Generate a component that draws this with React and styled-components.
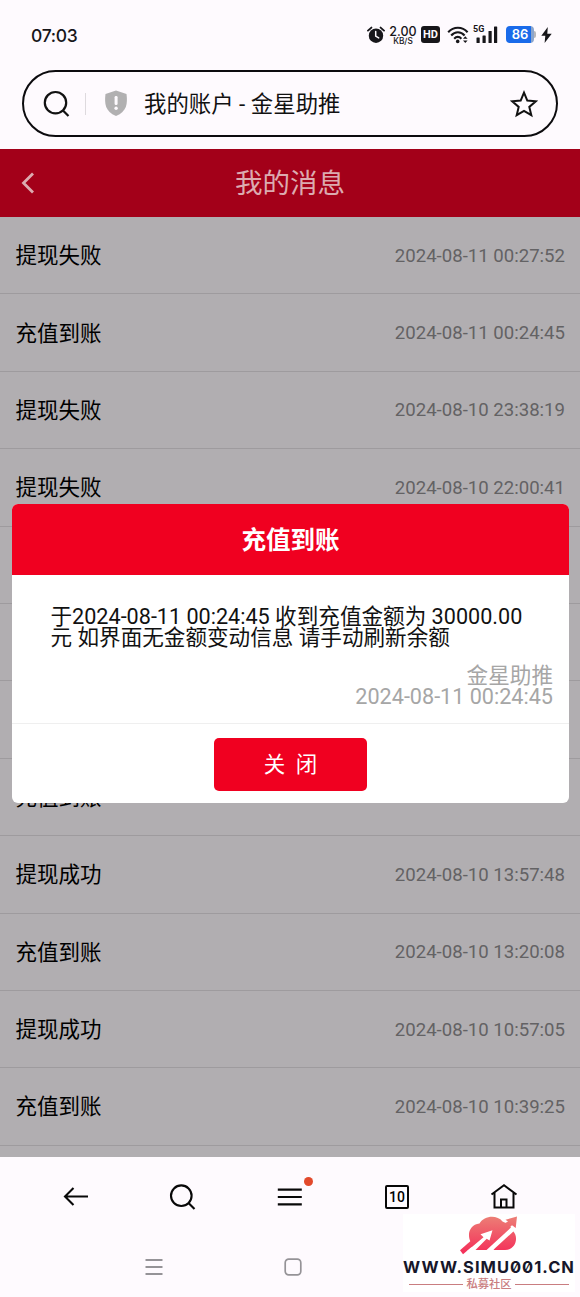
import { useState } from 'react';

import styled, { createGlobalStyle } from 'styled-components';

const messages = [
  { id: 1, title: '提现失败', time: '2024-08-11 00:27:52' },
  { id: 2, title: '充值到账', time: '2024-08-11 00:24:45' },
  { id: 3, title: '提现失败', time: '2024-08-10 23:38:19' },
  { id: 4, title: '提现失败', time: '2024-08-10 22:00:41' },
  { id: 5, title: '', time: '' },
  { id: 6, title: '', time: '' },
  { id: 7, title: '', time: '' },
  { id: 8, title: '充值到账', time: '' },
  { id: 9, title: '提现成功', time: '2024-08-10 13:57:48' },
  { id: 10, title: '充值到账', time: '2024-08-10 13:20:08' },
  { id: 11, title: '提现成功', time: '2024-08-10 10:57:05' },
  { id: 12, title: '充值到账', time: '2024-08-10 10:39:25' },
  { id: 13, title: '', time: '' },
];

function StatusIcons() {
  return (
    <StatusGroup>
      <svg width="18" height="18" viewBox="0 0 18 18">
        <circle cx="9" cy="9.7" r="7.2" fill="#17161a" />
        <path d="M1 4.6 4.4 1.6M17 4.6 13.6 1.6" stroke="#17161a" strokeWidth="1.9" strokeLinecap="round" />
        <path d="M8.7 5.6v4.5l3 1.8" stroke="#fefafe" strokeWidth="1.5" fill="none" strokeLinecap="round" />
      </svg>
      <Speed>
        <b>2.00</b>
        <small>KB/S</small>
      </Speed>
      <HdBadge>HD</HdBadge>
      <svg width="22" height="18" viewBox="0 0 22 18" fill="none" stroke="#17161a" strokeWidth="2.1">
        <path d="M1.2 6.3C6.6.3 15.2.3 20.6 6.3" />
        <path d="M4.2 9.5C8 5.2 13.8 5.2 17.6 9.5" />
        <path d="M7.2 12.7C9.4 10.3 12.2 10.3 14.4 12.7" />
        <circle cx="10.7" cy="15.4" r="1.8" fill="#17161a" stroke="none" />
        <path d="m16 12.8 2.3-2.5 2.3 2.5zM16 14.4l2.3 2.5 2.3-2.5z" fill="#17161a" stroke="none" />
      </svg>
      <Signal>
        <span>5G</span>
        <svg width="24" height="19" viewBox="0 0 24 19" fill="#17161a">
          <rect x="2.5" y="12.5" width="3.2" height="5.5" rx=".6" />
          <rect x="8.5" y="10.5" width="3.2" height="7.5" rx=".6" />
          <rect x="14.5" y="6" width="3.2" height="12" rx=".6" />
          <rect x="20" y="1.5" width="3.2" height="16.5" rx=".6" />
        </svg>
      </Signal>
      <Battery>86</Battery>
      <svg width="11" height="16" viewBox="0 0 11 16">
        <path d="M6.8 0 .3 8.8h4L3.6 16 10.7 6.7H6.3z" fill="#17161a" />
      </svg>
    </StatusGroup>
  );
}

function Watermark() {
  return (
    <ContainerWatermark>
      <svg width="62" height="42" viewBox="0 0 62 42">
        <defs>
          <linearGradient id="cloud" gradientUnits="userSpaceOnUse" x1="0" y1="2" x2="0" y2="38">
            <stop offset="0" stopColor="#ec7f76" />
            <stop offset="1" stopColor="#f4315a" />
          </linearGradient>
        </defs>
        <g fill="url(#cloud)">
          <path d="M13 28.500C8.500 21 11.500 10.500 21.500 9.500 26 1.500 39 .5 44.500 7.500L51 10.500 55 17C61 23 58 36 47 36H14z" />
          <path d="M59 2.500 57.700 14 54 11.200 44 20 38 14 50 7.500 47.500 5.700z" />
          <path d="M2 36.300 20 20.500 25 23.500 5 40.300z" />
        </g>
        <path
          d="M8.500 37.500 25.500 23.300 22.500 20.300 34.500 16.300 31.500 26.500 28.700 24.700 17 36.500zM28 36.500 54.600 12 57.500 15.500 37 34.300 35 36.500z"
          fill="#fff"
        />
      </svg>
      <WatermarkUrl>WWW.SIMU001.CN</WatermarkUrl>
      <WatermarkCaption>私募社区</WatermarkCaption>
    </ContainerWatermark>
  );
}

function App() {
  const [open, setOpen] = useState(true);

  return (
    <Phone>
      <GlobalStyle />
      <StatusBar>
        <Clock>07:03</Clock>
        <StatusIcons />
      </StatusBar>

      <AddressBar>
        <svg width="28" height="28" viewBox="0 0 28 28" fill="none" stroke="#111" strokeWidth="2.2">
          <circle cx="12.500" cy="12.700" r="10.700" />
          <path d="m20 20.500 5.500 5.500" />
        </svg>
        <Separator />
        <svg width="24" height="27" viewBox="0 0 24 27">
          <path d="M12 .5 22.500 4c1.200 9.500.4 17.500-10.500 22C1.100 21.500.3 13.500 1.500 4z" fill="#b1b0b1" />
          <rect x="10.600" y="6" width="3" height="9" rx="1.300" fill="#fefafe" />
          <circle cx="12.100" cy="18.300" r="1.700" fill="#fefafe" />
        </svg>
        <AddressText>我的账户 - 金星助推</AddressText>
        <svg width="28" height="28" viewBox="0 0 28 28" fill="none" stroke="#111" strokeWidth="2">
          <path d="m14 2.700 3.300 7.900 8.500.7-6.500 5.600 2 8.300L14 20.800l-7.300 4.400 2-8.300-6.500-5.600 8.500-.7z" />
        </svg>
      </AddressBar>

      <Page>
        <PageHeader>
          <svg width="14" height="22" viewBox="0 0 14 22" fill="none" stroke="currentColor" strokeWidth="2.800">
            <path d="M12 1.500 2.500 11 12 20.500" />
          </svg>
          <h1>我的消息</h1>
        </PageHeader>
        <List>
          {messages.map((message) => (
            <Row key={message.id}>
              <span>{message.title}</span>
              <time>{message.time}</time>
            </Row>
          ))}
        </List>
        {open && (
          <Mask>
            <Dialog>
              <DialogTitle>充值到账</DialogTitle>
              <DialogBody>
                <p>
                  于2024-08-11 00:24:45 收到充值金额为 30000.00
                  <br />元 如界面无金额变动信息 请手动刷新余额
                </p>
                <Signature>
                  金星助推
                  <br />
                  2024-08-11 00:24:45
                </Signature>
              </DialogBody>
              <DialogFooter>
                <CloseButton onClick={() => setOpen(false)}>关&nbsp; 闭</CloseButton>
              </DialogFooter>
            </Dialog>
          </Mask>
        )}
      </Page>

      <Toolbar>
        <svg width="28" height="28" viewBox="0 0 28 28" fill="none" stroke="#080808" strokeWidth="2.100">
          <path d="M26 13.500H3M11.500 5 3 13.500l8.500 8.500" />
        </svg>
        <svg width="28" height="28" viewBox="0 0 28 28" fill="none" stroke="#080808" strokeWidth="2.100">
          <circle cx="12.300" cy="12.700" r="10.300" />
          <path d="m19.500 20 6 6" />
        </svg>
        <MenuIcon>
          <svg width="28" height="28" viewBox="0 0 28 28" stroke="#080808" strokeWidth="2.200">
            <path d="M1.800 6.700h24M1.800 14h24M1.800 21.300h24" />
          </svg>
        </MenuIcon>
        <TabCount>10</TabCount>
        <svg width="28" height="28" viewBox="0 0 28 28" fill="none" stroke="#080808" strokeWidth="2">
          <path d="M1.500 11.500 14 2.300l12.500 9.200M4.500 9.800v14.700h19V9.800M11 24.500v-8h5.500v8" />
        </svg>
      </Toolbar>

      <SystemNav>
        <svg width="18" height="18" viewBox="0 0 18 18" stroke="#959397" strokeWidth="1.800">
          <path d="M.5 2h17M.5 9h17M.5 16h17" />
        </svg>
        <svg width="18" height="18" viewBox="0 0 18 18" fill="none" stroke="#959397" strokeWidth="1.700">
          <rect x="1.200" y="1.200" width="15.600" height="15.600" rx="3.500" />
        </svg>
      </SystemNav>
      <Watermark />
    </Phone>
  );
}

export default App;

const GlobalStyle = createGlobalStyle`
  * {
    box-sizing: border-box;
  }
  body {
    margin: 0;
    font-family: Roboto, 'Noto Sans CJK SC', sans-serif;
  }
  svg {
    display: block;
    flex: none;
  }
`;

const Phone = styled.div`
  position: relative;
  width: 580px;
  height: 1297px;
  overflow: hidden;
  display: flex;
  flex-direction: column;
  background-color: #fefafe;
`;

const StatusBar = styled.div`
  height: 69px;
  display: flex;
  align-items: center;
  justify-content: space-between;
  padding: 0 28px 0 31px;
  color: #17161a;
`;

const Clock = styled.div`
  padding-top: 1px;
  font-family: Inter, sans-serif;
  font-size: 17.5px;
  font-weight: 500;
  letter-spacing: -0.3px;
`;

const StatusGroup = styled.div`
  display: flex;
  align-items: center;
`;

const Speed = styled.div`
  width: 28px;
  margin-left: 4px;
  padding-top: 1px;
  display: flex;
  flex-direction: column;
  align-items: center;
  font-family: Inter, sans-serif;
  b {
    font-size: 12.5px;
    line-height: 11px;
    font-weight: 500;
  }
  small {
    font-size: 8.3px;
    line-height: 8px;
    font-weight: 500;
  }
`;

const HdBadge = styled.div`
  width: 19px;
  height: 17px;
  margin: 0 7px 0 4px;
  border-radius: 3px;
  background-color: #17161a;
  color: #fefafe;
  font-size: 11px;
  line-height: 17px;
  font-weight: 700;
  text-align: center;
`;

const Signal = styled.div`
  position: relative;
  margin-left: 5px;
  span {
    position: absolute;
    top: -1px;
    left: -1px;
    font-size: 9px;
    line-height: 10px;
    font-weight: 700;
  }
`;

const Battery = styled.div`
  position: relative;
  width: 28px;
  height: 17px;
  margin: 0 7px 0 8px;
  border-radius: 4px;
  background: linear-gradient(to right, #1a6bea 89%, #8ba5cd 89%);
  color: #fff;
  font-family: Inter, sans-serif;
  font-size: 13px;
  line-height: 17px;
  font-weight: 600;
  text-align: center;
  &::after {
    content: '';
    position: absolute;
    top: 5px;
    right: -2px;
    width: 2px;
    height: 7px;
    border-radius: 0 2px 2px 0;
    background-color: #b8b7bc;
  }
`;

const AddressBar = styled.div`
  height: 67px;
  margin: 1px 22px 0;
  padding: 0 18px 0 19px;
  display: flex;
  align-items: center;
  border: 2px solid #0c0b0e;
  border-radius: 34px;
`;

const Separator = styled.div`
  width: 1px;
  height: 22px;
  margin: 0 18px 0 14px;
  background-color: #dedade;
`;

const AddressText = styled.div`
  flex: 1;
  margin-left: 16px;
  color: #111;
  font-size: 22.4px;
  line-height: 28px;
`;

const Page = styled.div`
  position: relative;
  height: 1008px;
  margin-top: 12px;
  overflow: hidden;
`;

const PageHeader = styled.div`
  position: relative;
  z-index: 1;
  height: 68px;
  display: grid;
  grid-template-columns: 60px 1fr 60px;
  align-items: center;
  background-color: #a30019;
  color: #dcabb0;
  svg {
    margin-left: 21px;
  }
  h1 {
    margin: 0;
    padding-top: 2px;
    font-size: 27.5px;
    line-height: 36px;
    font-weight: 400;
    text-align: center;
  }
`;

const List = styled.div`
  display: flex;
  flex-direction: column;
`;

const Row = styled.div`
  height: 77.4px;
  flex: none;
  display: flex;
  align-items: center;
  justify-content: space-between;
  padding: 0 15px 0 15.5px;
  border-bottom: 1px solid #e2dfe2;
  color: #000;
  font-size: 21.5px;
  span {
    padding-bottom: 3px;
  }
  time {
    padding-top: 1px;
    color: #8f8d90;
    font-size: 18.6px;
  }
`;

const Mask = styled.div`
  position: absolute;
  inset: 0;
  display: flex;
  align-items: center;
  justify-content: center;
  background-color: rgba(0, 0, 0, 0.3);
`;

const Dialog = styled.div`
  width: 557px;
  margin-left: 1px;
  border-radius: 6px;
  overflow: hidden;
  background-color: #fff;
`;

const DialogTitle = styled.div`
  height: 71px;
  padding-top: 1px;
  background-color: #f00020;
  color: #fff;
  font-size: 24.5px;
  line-height: 71px;
  font-weight: 700;
  text-align: center;
`;

const DialogBody = styled.div`
  height: 148px;
  padding: 31px 16px 0 38.5px;
  color: #111;
  font-size: 21.6px;
  line-height: 21.6px;
  p {
    margin: 0;
    white-space: nowrap;
  }
`;

const Signature = styled.div`
  margin-top: 16px;
  color: #a6a6a6;
  text-align: right;
`;

const DialogFooter = styled.div`
  height: 80px;
  display: flex;
  align-items: center;
  justify-content: center;
  padding-top: 2px;
  border-top: 1px solid #efefef;
`;

const CloseButton = styled.button`
  width: 153px;
  height: 53px;
  padding: 0 0 3px;
  border: none;
  border-radius: 5px;
  background-color: #f00020;
  color: #fff;
  font-family: inherit;
  font-size: 21.5px;
`;

const Toolbar = styled.div`
  height: 79px;
  display: flex;
  align-items: center;
  justify-content: space-between;
  padding: 0 62px;
`;

const MenuIcon = styled.div`
  position: relative;
  &::after {
    content: '';
    position: absolute;
    top: -6px;
    right: -9px;
    width: 9px;
    height: 9px;
    border-radius: 50%;
    background-color: #e2492b;
  }
`;

const TabCount = styled.div`
  width: 24px;
  height: 24px;
  margin: 0 2px;
  border: 2px solid #080808;
  border-radius: 2px;
  font-size: 14px;
  line-height: 20px;
  font-weight: 500;
  text-align: center;
`;

const SystemNav = styled.div`
  display: flex;
  gap: 121px;
  padding: 22px 0 0 145px;
`;

const ContainerWatermark = styled.div`
  position: absolute;
  right: 5px;
  bottom: 5px;
  width: 172px;
  height: 78px;
  display: flex;
  flex-direction: column;
  align-items: center;
  background-color: #fff;
`;

const WatermarkUrl = styled.div`
  margin-top: 1px;
  color: #16172a;
  font-family: Inter, sans-serif;
  font-size: 16.5px;
  line-height: 20px;
  font-weight: 700;
  font-feature-settings: 'zero';
  letter-spacing: 1px;
  white-space: nowrap;
`;

const WatermarkCaption = styled.div`
  width: 160px;
  margin-top: 1px;
  display: flex;
  align-items: center;
  gap: 3px;
  color: #c97d80;
  font-size: 11.3px;
  line-height: 13px;
  font-weight: 500;
  &::before,
  &::after {
    content: '';
    flex: 1;
    height: 1px;
    background-color: #c97d80;
  }
`;
